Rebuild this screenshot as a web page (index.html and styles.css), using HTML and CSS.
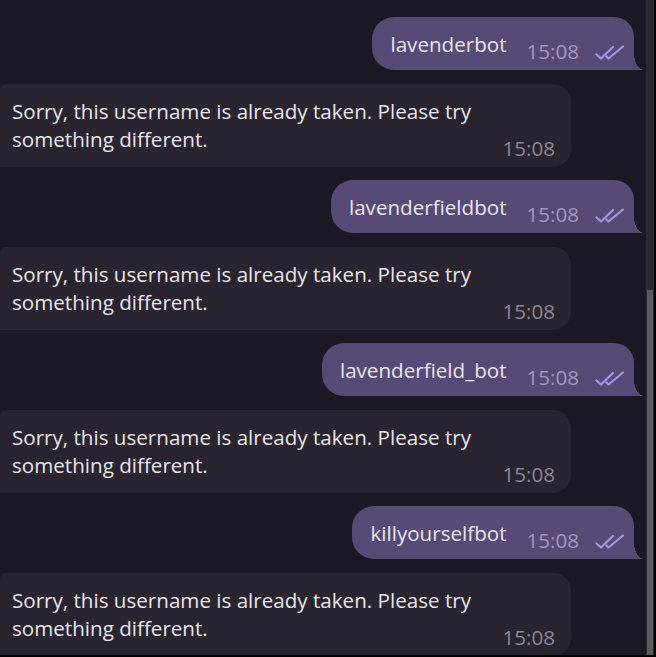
FILE: index.html
```html
<!DOCTYPE html>
<html lang="en">
<head>
<meta charset="utf-8">
<link rel="stylesheet" href="styles.css">
</head>
<body>
<div class="window">
  <div class="chat">
    <div class="msg out">
      <span class="text">lavenderbot</span>
      <span class="meta"><span class="time">15:08</span><svg class="check" width="30" height="16" viewBox="0 0 30 16"><path d="M1.5 9.5 L6 13.5 L18 2 M11.5 11.5 L13.5 13.5 L28 1.5" fill="none" stroke="currentColor" stroke-width="2.2" stroke-linecap="round" stroke-linejoin="round"/></svg></span>
    </div>
    <div class="msg in">
      <span class="text">Sorry, this username is already taken. Please try something different.</span>
      <span class="time">15:08</span>
    </div>
    <div class="msg out">
      <span class="text">lavenderfieldbot</span>
      <span class="meta"><span class="time">15:08</span><svg class="check" width="30" height="16" viewBox="0 0 30 16"><path d="M1.5 9.5 L6 13.5 L18 2 M11.5 11.5 L13.5 13.5 L28 1.5" fill="none" stroke="currentColor" stroke-width="2.2" stroke-linecap="round" stroke-linejoin="round"/></svg></span>
    </div>
    <div class="msg in">
      <span class="text">Sorry, this username is already taken. Please try something different.</span>
      <span class="time">15:08</span>
    </div>
    <div class="msg out">
      <span class="text">lavenderfield_bot</span>
      <span class="meta"><span class="time">15:08</span><svg class="check" width="30" height="16" viewBox="0 0 30 16"><path d="M1.5 9.5 L6 13.5 L18 2 M11.5 11.5 L13.5 13.5 L28 1.5" fill="none" stroke="currentColor" stroke-width="2.2" stroke-linecap="round" stroke-linejoin="round"/></svg></span>
    </div>
    <div class="msg in">
      <span class="text">Sorry, this username is already taken. Please try something different.</span>
      <span class="time">15:08</span>
    </div>
    <div class="msg out">
      <span class="text">killyourselfbot</span>
      <span class="meta"><span class="time">15:08</span><svg class="check" width="30" height="16" viewBox="0 0 30 16"><path d="M1.5 9.5 L6 13.5 L18 2 M11.5 11.5 L13.5 13.5 L28 1.5" fill="none" stroke="currentColor" stroke-width="2.2" stroke-linecap="round" stroke-linejoin="round"/></svg></span>
    </div>
    <div class="msg in">
      <span class="text">Sorry, this username is already taken. Please try something different.</span>
      <span class="time">15:08</span>
    </div>
  </div>
  <div class="scrollbar"><div class="thumb"></div></div>
</div>
</body>
</html>
```

FILE: styles.css
```css
html, body {
  margin: 0;
  padding: 0;
  background: #000;
}
body {
  width: 656px;
  height: 657px;
  overflow: hidden;
  font-family: "Open Sans", "Noto Sans", sans-serif;
  font-size: 20.6px;
}
.window {
  display: flex;
  width: 654px;
  height: 655px;
  background: #1c1924;
  overflow: hidden;
}
.chat {
  flex: 1;
  display: flex;
  flex-direction: column;
  gap: 13.5px;
  padding-top: 17px;
  overflow: hidden;
}
.scrollbar {
  width: 8px;
  background: #2b2930;
  display: flex;
  flex-direction: column;
}
.thumb {
  margin-top: 290px;
  margin-left: 1px;
  width: 6px;
  flex: 1;
  background: #5b5a60;
}
.msg {
  flex-shrink: 0;
  color: #e9e7ee;
}
.out {
  align-self: flex-end;
  margin-right: 12px;
  position: relative;
  height: 53px;
  box-sizing: border-box;
  background: #574a77;
  border-radius: 22px 20px 0 22px;
  display: flex;
  align-items: flex-start;
  padding: 13px 9px 0 18px;
  line-height: 29px;
}
.out::after {
  content: "";
  position: absolute;
  right: -10px;
  bottom: 0;
  width: 10px;
  height: 16px;
  background: radial-gradient(ellipse 10px 16px at 100% 0, transparent 98%, #574a77 100%);
}
.out .meta {
  display: flex;
  align-items: center;
  margin-left: 20px;
  margin-top: 7px;
}
.out .time {
  color: #a396c4;
}
.check {
  color: #a993e4;
  margin-left: 16px;
  margin-top: 2px;
}
.in {
  align-self: flex-start;
  width: 571px;
  height: 83px;
  box-sizing: border-box;
  background: #29242f;
  border-radius: 6px 18px 18px 0;
  padding: 13px 16px 5px 12px;
  display: grid;
  line-height: 28px;
}
.in .text {
  grid-area: 1 / 1;
  align-self: start;
}
.in .time {
  grid-area: 1 / 1;
  justify-self: end;
  align-self: end;
  color: #8c8698;
}
```
